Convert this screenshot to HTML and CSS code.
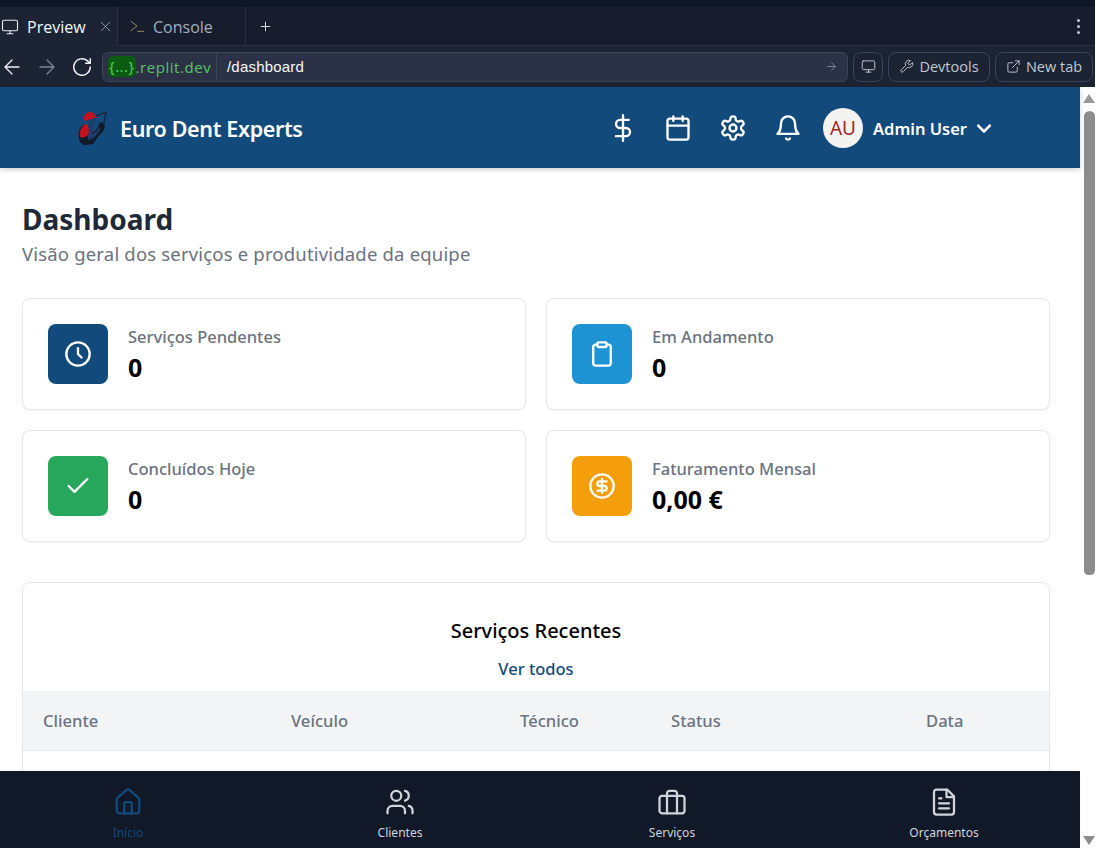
FILE: index.html
```html
<!DOCTYPE html>
<html lang="pt">
<head>
<meta charset="utf-8">
<title>Euro Dent Experts</title>
<link rel="stylesheet" href="styles.css">
</head>
<body>
<div class="browser">
  <div class="top-strip"></div>
  <div class="tabs">
    <div class="tab tab-active">
      <svg class="ic ic-tab" viewBox="0 0 24 24"><rect x="2" y="3" width="20" height="14" rx="2"/><path d="M8 21h8M12 17v4"/></svg>
      <span class="tab-label">Preview</span>
      <svg class="ic ic-close" viewBox="0 0 24 24"><path d="M18 6 6 18M6 6l12 12"/></svg>
    </div>
    <div class="tab tab-console">
      <svg class="ic ic-term" viewBox="0 0 24 24"><path d="m3 5 9 7-9 7M13 20h9"/></svg>
      <span class="tab-label muted">Console</span>
    </div>
    <svg class="ic ic-plus" viewBox="0 0 24 24"><path d="M12 4v16M4 12h16"/></svg>
    <div class="spacer"></div>
    <div class="kebab"><i></i><i></i><i></i></div>
  </div>
  <div class="toolbar">
    <svg class="ic ic-nav" viewBox="0 0 24 24"><path d="m12 19-7-7 7-7M19 12H5"/></svg>
    <svg class="ic ic-nav dim" viewBox="0 0 24 24"><path d="M5 12h14M12 5l7 7-7 7"/></svg>
    <svg class="ic ic-nav ic-reload" viewBox="0 0 24 24"><path d="M21 12a9 9 0 1 1-3-6.7L21 8"/><path d="M21 3v5h-5"/></svg>
    <div class="url">
      <div class="url-host"><span class="url-badge">{...}</span><span class="url-domain">.replit.dev</span></div>
      <div class="url-path">/dashboard</div>
      <svg class="ic ic-go" viewBox="0 0 24 24"><path d="M5 12h14M12 5l7 7-7 7"/></svg>
    </div>
    <div class="tool tool-icon"><svg class="ic ic-tool" viewBox="0 0 24 24"><rect x="2" y="3" width="20" height="14" rx="2"/><path d="M8 21h8M12 17v4"/></svg></div>
    <div class="tool tool-dev"><svg class="ic ic-tool" viewBox="0 0 24 24"><path d="M14.7 6.3a1 1 0 0 0 0 1.4l1.6 1.6a1 1 0 0 0 1.4 0l3.77-3.77a6 6 0 0 1-7.94 7.94l-6.91 6.91a2.12 2.12 0 0 1-3-3l6.91-6.91a6 6 0 0 1 7.94-7.94l-3.76 3.76z"/></svg>Devtools</div>
    <div class="tool tool-new"><svg class="ic ic-tool" viewBox="0 0 24 24"><path d="M15 3h6v6M10 14 21 3M18 13v6a2 2 0 0 1-2 2H5a2 2 0 0 1-2-2V8a2 2 0 0 1 2-2h6"/></svg>New tab</div>
  </div>
</div>

<div class="viewport">
  <div class="app">
    <header class="header">
      <svg class="logo" viewBox="0 0 31 36">
        <path class="logo-dark" d="M6 15C2 18 1 24 2 29c1 4 3 6 7 6l7-1 5-7 6-7 1-5-3-3-3 2-3 6-4 3 1-8z"/>
        <path class="logo-blue" d="M12 8l7-1v6l-3 3-1 8 5-3 2-5 1 4-6 8-6 2V16z"/>
        <path class="logo-red" d="M7 15c-3 3-5 7-4 12 3 1 6 0 8-2l1-4-1-6-3-1z"/>
        <path class="logo-red" d="M7 10C6 6 9 2 13 2c3 0 5 2 5 5h4l-8 2-6 2z"/>
        <path class="logo-tool" d="M19 6 29 2l-2 11"/>
      </svg>
      <span class="brand">Euro Dent Experts</span>
      <div class="spacer"></div>
      <div class="header-icons">
        <svg class="ic ic-head" viewBox="0 0 24 24"><path d="M12 1v22M17 5H9.5a3.5 3.5 0 0 0 0 7h5a3.5 3.5 0 0 1 0 7H6"/></svg>
        <svg class="ic ic-head" viewBox="0 0 24 24"><path d="M8 2v4M16 2v4"/><rect x="3" y="4" width="18" height="18" rx="2"/><path d="M3 10h18"/></svg>
        <svg class="ic ic-head" viewBox="0 0 24 24"><path d="M12.22 2h-.44a2 2 0 0 0-2 2v.18a2 2 0 0 1-1 1.73l-.43.25a2 2 0 0 1-2 0l-.15-.08a2 2 0 0 0-2.73.73l-.22.38a2 2 0 0 0 .73 2.73l.15.1a2 2 0 0 1 1 1.72v.51a2 2 0 0 1-1 1.74l-.15.09a2 2 0 0 0-.73 2.73l.22.38a2 2 0 0 0 2.73.73l.15-.08a2 2 0 0 1 2 0l.43.25a2 2 0 0 1 1 1.73V20a2 2 0 0 0 2 2h.44a2 2 0 0 0 2-2v-.18a2 2 0 0 1 1-1.73l.43-.25a2 2 0 0 1 2 0l.15.08a2 2 0 0 0 2.73-.73l.22-.39a2 2 0 0 0-.73-2.73l-.15-.08a2 2 0 0 1-1-1.74v-.5a2 2 0 0 1 1-1.74l.15-.09a2 2 0 0 0 .73-2.73l-.22-.38a2 2 0 0 0-2.73-.73l-.15.08a2 2 0 0 1-2 0l-.43-.25a2 2 0 0 1-1-1.73V4a2 2 0 0 0-2-2z"/><circle cx="12" cy="12" r="3"/></svg>
        <svg class="ic ic-head" viewBox="0 0 24 24"><path d="M6 8a6 6 0 0 1 12 0c0 7 3 9 3 9H3s3-2 3-9M10.3 21a1.94 1.94 0 0 0 3.4 0"/></svg>
      </div>
      <div class="avatar">AU</div>
      <span class="user">Admin User</span>
      <svg class="ic ic-chev" viewBox="0 0 24 24"><path d="m5 8 7 7 7-7"/></svg>
    </header>

    <main class="content">
      <h1 class="title">Dashboard</h1>
      <p class="subtitle">Visão geral dos serviços e produtividade da equipe</p>

      <section class="stats">
        <div class="card">
          <div class="badge badge-navy"><svg class="ic ic-badge" viewBox="0 0 24 24"><circle cx="12" cy="12" r="10"/><path d="M12 7v5l3 3"/></svg></div>
          <div><div class="stat-label">Serviços Pendentes</div><div class="stat-value">0</div></div>
        </div>
        <div class="card">
          <div class="badge badge-blue"><svg class="ic ic-badge" viewBox="0 0 24 24"><rect x="8" y="2" width="8" height="4" rx="1"/><path d="M16 4h1.5a2 2 0 0 1 2 2v14a2 2 0 0 1-2 2h-11a2 2 0 0 1-2-2V6a2 2 0 0 1 2-2H8"/></svg></div>
          <div><div class="stat-label">Em Andamento</div><div class="stat-value">0</div></div>
        </div>
        <div class="card">
          <div class="badge badge-green"><svg class="ic ic-badge" viewBox="0 0 24 24"><path d="M20 6 9 17l-5-5"/></svg></div>
          <div><div class="stat-label">Concluídos Hoje</div><div class="stat-value">0</div></div>
        </div>
        <div class="card">
          <div class="badge badge-amber"><svg class="ic ic-badge" viewBox="0 0 24 24"><circle cx="12" cy="12" r="10"/><path d="M16 8h-6a2 2 0 1 0 0 4h4a2 2 0 1 1 0 4H8M12 18V6"/></svg></div>
          <div><div class="stat-label">Faturamento Mensal</div><div class="stat-value">0,00 €</div></div>
        </div>
      </section>

      <section class="recent">
        <h2 class="recent-title">Serviços Recentes</h2>
        <a class="recent-link">Ver todos</a>
        <div class="thead">
          <span>Cliente</span><span>Veículo</span><span>Técnico</span><span>Status</span><span>Data</span>
        </div>
      </section>
    </main>

    <nav class="bottom">
      <div class="nav-item nav-active">
        <svg class="ic ic-bottom" viewBox="0 0 24 24"><path d="M15 21v-8a1 1 0 0 0-1-1h-4a1 1 0 0 0-1 1v8"/><path d="M3 10a2 2 0 0 1 .709-1.528l7-5.999a2 2 0 0 1 2.582 0l7 5.999A2 2 0 0 1 21 10v9a2 2 0 0 1-2 2H5a2 2 0 0 1-2-2z"/></svg>
        <span>Início</span>
      </div>
      <div class="nav-item">
        <svg class="ic ic-bottom" viewBox="0 0 24 24"><path d="M16 21v-2a4 4 0 0 0-4-4H6a4 4 0 0 0-4 4v2"/><circle cx="9" cy="7" r="4"/><path d="M22 21v-2a4 4 0 0 0-3-3.87M16 3.13a4 4 0 0 1 0 7.75"/></svg>
        <span>Clientes</span>
      </div>
      <div class="nav-item">
        <svg class="ic ic-bottom" viewBox="0 0 24 24"><rect x="2" y="7" width="20" height="14" rx="2"/><path d="M16 21V5a2 2 0 0 0-2-2h-4a2 2 0 0 0-2 2v16"/></svg>
        <span>Serviços</span>
      </div>
      <div class="nav-item">
        <svg class="ic ic-bottom" viewBox="0 0 24 24"><path d="M14.5 2H6a2 2 0 0 0-2 2v16a2 2 0 0 0 2 2h12a2 2 0 0 0 2-2V7.5L14.5 2z"/><path d="M14 2v6h6M16 13H8M16 17H8M10 9H8"/></svg>
        <span>Orçamentos</span>
      </div>
    </nav>
  </div>

  <div class="scrollbar">
    <div class="arrow-up"></div>
    <div class="thumb"></div>
    <div class="spacer"></div>
    <div class="arrow-down"></div>
  </div>
</div>
</body>
</html>
```
FILE: styles.css
```css
* { box-sizing: border-box; }
html, body { margin: 0; height: 100%; }
body {
  width: 1095px;
  height: 848px;
  overflow: hidden;
  display: flex;
  flex-direction: column;
  font-family: "Noto Sans", "Open Sans", sans-serif;
  background: #fff;
}
.spacer { flex: 1; }
.ic {
  display: block;
  fill: none;
  stroke: currentColor;
  stroke-width: 2;
  stroke-linecap: round;
  stroke-linejoin: round;
  flex: none;
}

/* browser chrome */
.browser { height: 87px; flex: none; background: #1c2333; }
.top-strip { height: 7px; background: #0e1525; }
.tabs {
  height: 39px;
  display: flex;
  align-items: stretch;
  background: #171d2d;
  border-bottom: 1px solid #2b3245;
  font-family: "Open Sans", "Noto Sans", sans-serif;
  font-size: 16px;
}
.tab { display: flex; align-items: center; border-right: 1px solid #2b3245; }
.tab-active { width: 118px; background: #1c2333; color: #f5f9fc; padding-left: 1px; margin-bottom: -1px; }
.tab-console { width: 128px; padding-left: 11px; }
.tab-label { margin-left: 8px; padding-top: 1px; }
.muted { color: #a3adbd; margin-left: 8px; }
.ic-tab { width: 18px; height: 18px; stroke-width: 1.5; color: #e8edf3; }
.ic-close { width: 17px; height: 17px; margin-left: 11px; color: #9da6b5; stroke-width: 1.2; }
.ic-term { width: 16px; height: 16px; color: #94895c; stroke-width: 1.5; }
.ic-plus { width: 13px; height: 13px; margin: 13px 0 0 13px; color: #f0f3f7; stroke-width: 1.6; }
.kebab { width: 32px; display: flex; flex-direction: column; justify-content: center; align-items: center; gap: 3px; padding-right: 2px; }
.kebab i { width: 3px; height: 3px; border-radius: 50%; background: #c2c8d2; }

.toolbar {
  height: 41px;
  display: flex;
  align-items: center;
  padding: 0 2px 0 0;
  font-family: "Open Sans", "Noto Sans", sans-serif;
}
.ic-nav { width: 24px; height: 24px; margin-right: 11px; color: #eef1f5; stroke-width: 1.3; }
.ic-nav.dim { margin-right: 12px; color: #7d8595; }
.ic-nav.ic-reload { width: 22px; height: 22px; margin-right: 9px; stroke-width: 1.6; }
.url {
  width: 747px;
  height: 30px;
  display: flex;
  align-items: center;
  background: #2b3245;
  border: 1px solid #3c445c;
  border-radius: 6px;
}
.url-host { height: 100%; display: flex; align-items: center; padding-left: 5px; width: 114px; border-right: 1px solid #3c445c; }
.url-badge { background: #0b5c12; color: #59d65f; font-size: 15px; line-height: 21px; height: 21px; border-radius: 5px; padding: 0 1px; letter-spacing: .5px; }
.url-domain { color: #58c463; font-size: 15px; letter-spacing: .55px; }
.url-path { flex: 1; color: #f5f9fc; font-size: 15px; padding-left: 10px; font-family: "Liberation Sans", sans-serif; letter-spacing: .2px; }
.ic-go { width: 13px; height: 13px; margin-right: 9px; color: #8d95a6; stroke-width: 1.5; }
.tool {
  height: 30px;
  margin-left: 5px;
  display: flex;
  align-items: center;
  justify-content: center;
  gap: 5px;
  border: 1px solid #3c445c;
  border-radius: 8px;
  color: #c2c8d2;
  font-size: 14.5px;
  flex: none;
}
.tool-icon { width: 30px; }
.tool-dev { width: 102px; }
.tool-new { width: 98px; }
.ic-tool { width: 15px; height: 15px; stroke-width: 1.5; }

/* app */
.viewport { flex: 1; display: flex; min-height: 0; }
.app { width: 1080px; display: flex; flex-direction: column; min-height: 0; }
.header {
  height: 81px;
  flex: none;
  display: flex;
  align-items: center;
  padding-left: 77px;
  background: #134a7c;
  color: #fff;
  box-shadow: 0 2px 5px rgba(0, 0, 0, .18);
  position: relative;
}
.logo { width: 31px; height: 36px; }
.logo-dark { fill: #131b2b; }
.logo-blue { fill: #1a3f6b; }
.logo-red { fill: #c3141e; }
.logo-tool { fill: none; stroke: #131b2b; stroke-width: 1; }
.brand { margin: 2px 0 0 12px; font-size: 21.5px; font-weight: 600; letter-spacing: -.35px; }
.header-icons { display: flex; gap: 27px; margin-right: 21px; }
.ic-head { width: 28px; height: 28px; }
.avatar {
  width: 40px;
  height: 40px;
  border-radius: 50%;
  background: #f3f3f1;
  color: #a5281c;
  font-size: 19px;
  display: flex;
  align-items: center;
  justify-content: center;
}
.user { margin: 2px 0 0 10px; font-size: 16.5px; font-weight: 600; }
.ic-chev { width: 20px; height: 20px; margin: 2px 86px 0 7px; stroke-width: 3; }

.content { flex: 1; min-height: 0; overflow: hidden; padding: 32px 30px 0 22px; }
.title { margin: 0; font-size: 28px; line-height: 38px; font-weight: 700; color: #1f2937; }
.subtitle { margin: 2px 0 30px; font-size: 18.5px; line-height: 28px; letter-spacing: .18px; color: #6b7280; }
.stats { display: grid; grid-template-columns: 504px 504px; gap: 20px; }
.card {
  height: 112px;
  display: flex;
  align-items: center;
  gap: 20px;
  padding-left: 25px;
  background: #fff;
  border: 1px solid #e5e7eb;
  border-radius: 8px;
  box-shadow: 0 1px 2px rgba(0, 0, 0, .05);
}
.badge { width: 60px; height: 60px; border-radius: 8px; display: flex; align-items: center; justify-content: center; color: #fff; flex: none; }
.badge-navy { background: #134a7c; }
.badge-blue { background: #1e93d3; }
.badge-green { background: #27a75b; }
.badge-amber { background: #f59e0b; }
.ic-badge { width: 28px; height: 28px; }
.stat-label { font-size: 16.5px; line-height: 24px; font-weight: 500; color: #6b7280; }
.stat-value { margin-top: 2px; font-size: 25px; line-height: 32px; font-weight: 700; color: #000; }

.recent {
  margin-top: 40px;
  height: 300px;
  background: #fff;
  border: 1px solid #e5e7eb;
  border-radius: 8px;
  text-align: center;
  overflow: hidden;
}
.recent-title { margin: 32px 0 0; font-size: 20px; line-height: 32px; font-weight: 500; color: #000; }
.recent-link { display: block; margin-top: 10px; font-size: 16.5px; line-height: 24px; font-weight: 500; color: #134a7c; }
.thead {
  display: grid;
  grid-template-columns: 248px 229px 151px 255px 1fr;
  align-items: center;
  height: 60px;
  margin-top: 10px;
  padding-left: 20px;
  background: #f3f4f6;
  border-bottom: 1px solid #e5e7eb;
  text-align: left;
  font-size: 16.6px;
  font-weight: 500;
  color: #6b7280;
}

.bottom {
  height: 77px;
  flex: none;
  display: grid;
  grid-template-columns: repeat(4, 256px);
  gap: 16px;
  background: #111827;
  position: relative;
}
.nav-item {
  display: flex;
  flex-direction: column;
  align-items: center;
  padding-top: 16px;
  color: #d1d5db;
  font-size: 12px;
  line-height: 16px;
  gap: 8px;
}
.nav-active { color: #134a7c; }
.ic-bottom { width: 30px; height: 30px; stroke-width: 1.8; }

.scrollbar { width: 15px; background: #fff; display: flex; flex-direction: column; align-items: flex-end; flex: none; }
.arrow-up { margin-top: 7px; border: 6px solid transparent; border-top: 0; border-bottom: 9px solid #9a9a9a; }
.thumb { width: 11px; height: 464px; margin-top: 8px; background: #8c8c8c; border-radius: 6px 6px 5px 5px; }
.arrow-down { margin-bottom: 3px; border: 6px solid transparent; border-bottom: 0; border-top: 9px solid #8c8c8c; }
```
